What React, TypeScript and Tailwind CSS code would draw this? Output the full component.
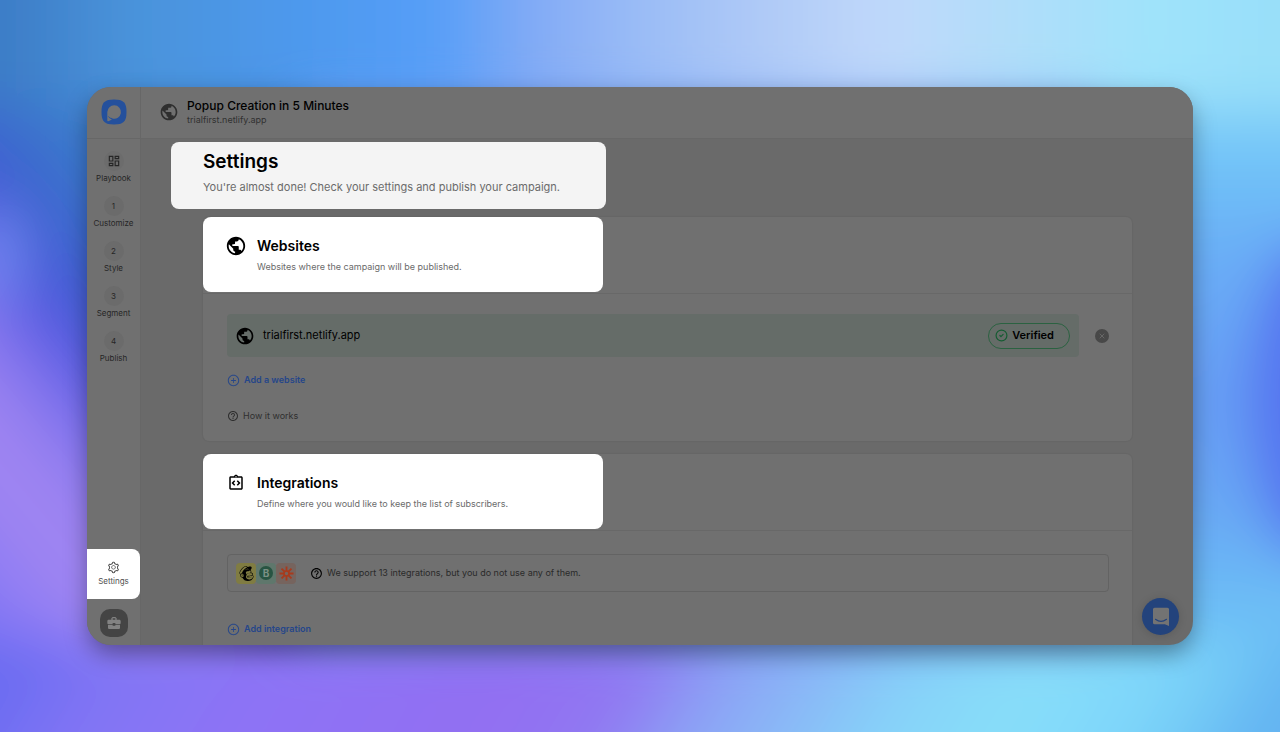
import React from 'react';
import { MdPublic, MdHelpOutline, MdOutlineDashboard, MdBusinessCenter, MdOutlineIntegrationInstructions } from 'react-icons/md';
import { AiOutlinePlusCircle, AiOutlineSetting } from 'react-icons/ai';
import { SiMailchimp } from 'react-icons/si';
import { CircleCheck, X } from 'lucide-react';

const steps = ['Customize', 'Style', 'Segment', 'Publish'];

const Wallpaper: React.FC = () => (
    <svg className="absolute inset-0 h-full w-full" viewBox="0 0 1280 732" preserveAspectRatio="none" aria-hidden="true">
        <defs>
            <filter id="soft" x="-20%" y="-20%" width="140%" height="140%">
                <feGaussianBlur stdDeviation="26" />
            </filter>
            <linearGradient id="top" gradientUnits="userSpaceOnUse" x1="0" y1="0" x2="1280" y2="0">
                <stop offset="0" stopColor="#3c7cc6" />
                <stop offset="0.1" stopColor="#4a93da" />
                <stop offset="0.24" stopColor="#4e99ee" />
                <stop offset="0.34" stopColor="#559ef8" />
                <stop offset="0.42" stopColor="#84abf5" />
                <stop offset="0.5" stopColor="#9abcf6" />
                <stop offset="0.59" stopColor="#aec9f7" />
                <stop offset="0.69" stopColor="#c0d8fa" />
                <stop offset="0.78" stopColor="#b2ddf9" />
                <stop offset="0.9" stopColor="#9fe3fa" />
                <stop offset="1" stopColor="#98dff9" />
            </linearGradient>
            <linearGradient id="left" gradientUnits="userSpaceOnUse" x1="0" y1="0" x2="-360" y2="300">
                <stop offset="0" stopColor="#3c80cc" />
                <stop offset="0.12" stopColor="#3b72cc" />
                <stop offset="0.22" stopColor="#3d63d0" />
                <stop offset="0.32" stopColor="#4c59da" />
                <stop offset="0.39" stopColor="#6462e6" />
                <stop offset="0.48" stopColor="#8878ee" />
                <stop offset="0.6" stopColor="#a085f2" />
                <stop offset="0.7" stopColor="#9d84f2" />
                <stop offset="0.82" stopColor="#8a7af4" />
                <stop offset="1" stopColor="#6e6ef2" />
            </linearGradient>
            <linearGradient id="right" gradientUnits="userSpaceOnUse" x1="0" y1="0" x2="0" y2="732">
                <stop offset="0" stopColor="#9fe2f9" />
                <stop offset="0.11" stopColor="#8ed8f8" />
                <stop offset="0.22" stopColor="#70c3f8" />
                <stop offset="0.34" stopColor="#6aaef6" />
                <stop offset="0.55" stopColor="#669df4" />
                <stop offset="0.7" stopColor="#68a8f4" />
                <stop offset="0.82" stopColor="#6cbcf5" />
                <stop offset="1" stopColor="#72cdf8" />
            </linearGradient>
            <linearGradient id="bottom" gradientUnits="userSpaceOnUse" x1="0" y1="690" x2="941" y2="1255">
                <stop offset="0" stopColor="#6b6cf2" />
                <stop offset="0.08" stopColor="#8175f4" />
                <stop offset="0.2" stopColor="#8d73f5" />
                <stop offset="0.4" stopColor="#926ff2" />
                <stop offset="0.49" stopColor="#9078f2" />
                <stop offset="0.56" stopColor="#8ca2f5" />
                <stop offset="0.63" stopColor="#8ab8f7" />
                <stop offset="0.71" stopColor="#86d2f9" />
                <stop offset="0.8" stopColor="#88def9" />
                <stop offset="0.9" stopColor="#7ed6fa" />
                <stop offset="0.96" stopColor="#70c6f5" />
                <stop offset="1" stopColor="#64b4f2" />
            </linearGradient>
        </defs>
        <rect width="1280" height="732" fill="#6f9cf0" />
        <g filter="url(#soft)">
            <rect x="-100" y="60" width="400" height="600" fill="url(#left)" />
            <ellipse cx="0" cy="255" rx="24" ry="50" fill="#6f86f0" />
            <rect x="1100" y="60" width="300" height="600" fill="url(#right)" />
            <ellipse cx="1310" cy="400" rx="60" ry="160" fill="#5573f0" />
            <rect x="-100" y="-100" width="1500" height="205" fill="url(#top)" />
            <rect x="-100" y="640" width="1500" height="200" fill="url(#bottom)" />
        </g>
    </svg>
);

const Logo: React.FC = () => (
    <svg width="26" height="26" viewBox="0 0 26 26" role="img" aria-label="Home">
        <path d="M13 .5C22.500.5 25.500 3.500 25.500 13S22.500 25.500 13 25.500.5 22.500.5 13 3.500.5 13 .5Z" fill="#24509c" />
        <path d="M13.300 6.300a6.700 6.700 0 1 1-2 13.100c-.9 1.300-2.300 2.300-4.100 2.800-.6.100-.9-.2-.9-.8V13a6.900 6.900 0 0 1 7-6.700Z" fill="#737373" />
        <path d="M7.500 17.500c.8 1.400 2 2.100 3.700 2" fill="none" stroke="#24509c" strokeWidth="1" />
    </svg>
);

const Zapier: React.FC = () => (
    <svg width="15" height="15" viewBox="0 0 16 16" stroke="#a83a1c" strokeWidth="1.900" fill="none" aria-hidden="true">
        <path d="M8 .5v5M8 10.500v5M.5 8h5M10.500 8h5M2.700 2.700l3.500 3.500M9.800 9.800l3.500 3.500M13.300 2.700L9.800 6.200M6.200 9.800l-3.500 3.500" />
        <circle cx="8" cy="8" r="2.600" strokeWidth="1.600" />
    </svg>
);

const ChatIcon: React.FC = () => (
    <svg width="18" height="20" viewBox="0 0 18 20" aria-hidden="true">
        <path d="M2.500.8h13a1.500 1.500 0 0 1 1.500 1.500V19l-4.200-1.700H2.500A1.500 1.500 0 0 1 1 15.800V2.300A1.500 1.500 0 0 1 2.500.8Z" fill="#737373" />
        <path d="M3.500 12.300c3.300 2.500 7.700 2.500 11 0" fill="none" stroke="#23437c" strokeWidth="1.200" strokeLinecap="round" />
    </svg>
);

type SectionProps = {
    icon: React.ReactNode;
    title: string;
    description: string;
    children: React.ReactNode;
};

const Section: React.FC<SectionProps> = ({ icon, title, description, children }) => (
    <section className="rounded-md bg-[#707070] shadow-[0_0_1px_1px_rgba(0,0,0,0.04)]">
        <div className="border-b border-[#686868] pb-px">
            <div className="flex h-[75px] max-w-[400px] gap-2.5 rounded-lg bg-white pl-[22px] pt-[18px]">
                <span className="flex h-[22px] w-[22px] items-center justify-center text-black">{icon}</span>
                <div>
                    <h2 className="text-[14px] font-semibold leading-[22px] text-black">{title}</h2>
                    <p className="text-[9px] leading-5 text-[#6b6b6b]">{description}</p>
                </div>
            </div>
        </div>
        {children}
    </section>
);

const App: React.FC = () => {
    return (
        <div className="relative h-screen overflow-hidden p-[87px] font-['Inter',sans-serif]">
            <Wallpaper />
            <div className="relative flex h-full overflow-hidden rounded-3xl bg-[#6a6a6a] shadow-[0_10px_24px_-2px_rgba(0,0,0,0.4)]">
                <aside className="flex w-[54px] shrink-0 flex-col border-r border-[#676767] bg-[#707070]">
                    <a href="#home" className="flex h-[52px] items-center justify-center border-b border-[#676767] pb-0.5">
                        <Logo />
                    </a>
                    <nav className="flex flex-1 flex-col pt-3">
                        <div className="flex flex-col gap-[11px] text-[8px] leading-[14px] text-[#262626]">
                            <a href="#playbook" className="flex flex-col items-center">
                                <span className="flex h-5 w-5 items-center justify-center rounded-full bg-[#6c6c6c]">
                                    <MdOutlineDashboard size={14} />
                                </span>
                                Playbook
                            </a>
                            {steps.map((step, i) => (
                                <a key={step} href={`#${step.toLowerCase()}`} className="flex flex-col items-center">
                                    <span className="flex h-5 w-5 items-center justify-center rounded-full bg-[#6b6b6b]">{i + 1}</span>
                                    {step}
                                </a>
                            ))}
                        </div>
                        <a
                            href="#settings"
                            className="mt-auto flex h-[50px] flex-col items-center justify-center rounded-r-lg bg-white text-[8px] leading-[14px] text-[#505050]"
                        >
                            <AiOutlineSetting size={13} />
                            Settings
                        </a>
                    </nav>
                    <button type="button" aria-label="Toolbox" className="mx-auto mb-2 mt-2.5 flex h-7 w-7 items-center justify-center rounded-[10px] bg-[#444444] text-[#828282]">
                        <MdBusinessCenter size={16} />
                    </button>
                </aside>

                <div className="flex min-w-0 flex-1 flex-col">
                    <header className="flex h-[52px] shrink-0 items-center gap-2 border-b border-[#676767] bg-[#707070] pb-0.5 pl-[18px]">
                        <MdPublic size={20} className="text-[#2f2f2f]" />
                        <div>
                            <div className="text-[12px] font-medium leading-4 text-black">Popup Creation in 5 Minutes</div>
                            <div className="text-[9px] leading-3 text-[#303030]">trialfirst.netlify.app</div>
                        </div>
                    </header>

                    <main className="min-h-0 flex-1 overflow-hidden pl-[62px] pr-[61px] pt-[3px]">
                        <div className="-ml-8 mb-2 h-[67px] max-w-[435px] rounded-lg bg-[#f4f4f4] pl-8 pt-2">
                            <h1 className="text-[19px] font-semibold leading-6 text-black">Settings</h1>
                            <p className="text-[11px] leading-[26px] text-[#6b6b6b]">You're almost done! Check your settings and publish your campaign.</p>
                        </div>

                        <div className="flex flex-col gap-[13px]">
                            <Section icon={<MdPublic size={22} />} title="Websites" description="Websites where the campaign will be published.">
                                <div className="pb-4 pl-6 pr-[23px] pt-5">
                                    <div className="flex items-center">
                                        <div className="flex h-[43px] flex-1 items-center gap-2 rounded bg-[#656c68] pl-2 pr-[9px] text-[11px] text-black">
                                            <MdPublic size={20} />
                                            <span className="flex-1">trialfirst.netlify.app</span>
                                            <span className="flex h-[26px] items-center gap-1 rounded-full border border-[#2b6241] pl-1.5 pr-[15px] font-semibold">
                                                <CircleCheck size={13} strokeWidth={2.2} className="text-[#155c32]" />
                                                Verified
                                            </span>
                                        </div>
                                        <button type="button" aria-label="Remove website" className="ml-4 flex h-3.5 w-3.5 items-center justify-center rounded-full bg-[#484848] text-[#757575]">
                                            <X size={8} />
                                        </button>
                                    </div>
                                    <button type="button" className="mt-3.5 flex h-[18px] items-center gap-1 text-[9px] font-semibold text-[#25468a]">
                                        <AiOutlinePlusCircle size={13} />
                                        Add a website
                                    </button>
                                    <a href="#how-it-works" className="mt-[18px] flex h-[18px] items-center gap-1 text-[9px] text-[#2f2f2f]">
                                        <MdHelpOutline size={12} />
                                        How it works
                                    </a>
                                </div>
                            </Section>

                            <Section
                                icon={<MdOutlineIntegrationInstructions size={18} />}
                                title="Integrations"
                                description="Define where you would like to keep the list of subscribers."
                            >
                                <div className="pb-4 pl-6 pr-[23px] pt-[23px]">
                                    <div className="flex h-[38px] items-center rounded border border-[#636363] pl-2">
                                        <div className="flex">
                                            <span className="flex h-[21px] w-5 items-center justify-center rounded-sm bg-[#807c42] text-black">
                                                <SiMailchimp size={15} />
                                            </span>
                                            <span className="flex h-[21px] w-5 items-center justify-center rounded-sm bg-[#5f776c]">
                                                <span className="flex h-3.5 w-3.5 items-center justify-center rounded-full bg-[#285442] text-[10px] font-bold text-[#7b9085]">B</span>
                                            </span>
                                            <span className="flex h-[21px] w-5 items-center justify-center rounded-sm bg-[#76645e]">
                                                <Zapier />
                                            </span>
                                        </div>
                                        <MdHelpOutline size={13} className="ml-3.5 text-black" />
                                        <span className="ml-1 text-[9px] text-[#2a2a2a]">We support 13 integrations, but you do not use any of them.</span>
                                    </div>
                                    <button type="button" className="mt-7 flex h-[18px] items-center gap-1 text-[9px] font-semibold text-[#25468a]">
                                        <AiOutlinePlusCircle size={13} />
                                        Add integration
                                    </button>
                                </div>
                            </Section>
                        </div>
                    </main>
                </div>

                <button
                    type="button"
                    aria-label="Open chat"
                    className="absolute bottom-2.5 right-3.5 flex h-[37px] w-[37px] items-center justify-center rounded-full bg-[#23437c] shadow-[0_1px_8px_rgba(0,0,0,0.15)]"
                >
                    <ChatIcon />
                </button>
            </div>
        </div>
    );
};

export default App;
